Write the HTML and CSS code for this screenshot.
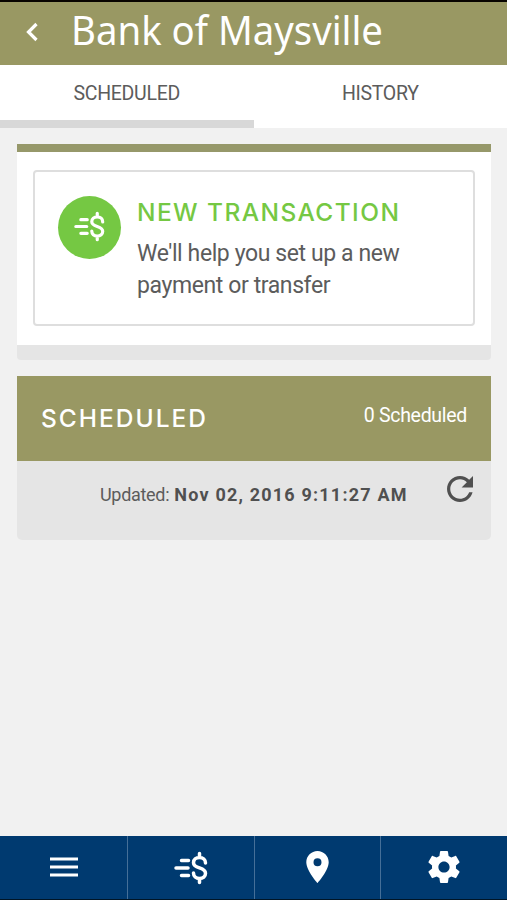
FILE: index.html
```html
<!DOCTYPE html>
<html lang="en">
<head>
    <meta charset="UTF-8">
    <meta name="viewport" content="width=device-width, initial-scale=1.0">
    <title>Bank of Maysville</title>
    <link rel="stylesheet" href="styles.css">
</head>
<body>

<header class="header">
    <svg class="back" viewBox="0 0 12 20"><path d="M10.500 2 2.500 10l8 8"/></svg>
    <svg class="logo" viewBox="0 0 330 63"><text x="2" y="45" textLength="312" lengthAdjust="spacingAndGlyphs">Bank of Maysville</text></svg>
</header>

<nav class="tabs">
    <div class="tab active">SCHEDULED</div>
    <div class="tab">HISTORY</div>
</nav>

<main class="content">
    <section class="card">
        <div class="card-body">
            <div class="new-transaction">
                <div class="circle">
                    <svg class="money" viewBox="0 0 34 34"><path d="M7.500 9.500h7M2 17h12M7.500 24.500h7"/><path d="M31.500 12c0-3.300-2.500-5.500-6-5.500s-6 2-6 5.200c0 6.500 12 4 12 10.600 0 3.200-2.500 5.200-6 5.200s-6-2.200-6-5.500M25.500 2.500v4M25.500 27.500v4"/></svg>
                </div>
                <div class="text">
                    <h2>NEW TRANSACTION</h2>
                    <p>We'll help you set up a new<br>payment or transfer</p>
                </div>
            </div>
        </div>
        <div class="card-footer"></div>
    </section>

    <section class="scheduled">
        <div class="scheduled-header">
            <h2>SCHEDULED</h2>
            <span class="count">0 Scheduled</span>
        </div>
        <div class="updated">
            <span class="label">Updated:</span>
            <b>Nov 02, 2016 9:11:27 AM</b>
            <svg class="refresh" viewBox="4 4 16 16"><path d="M17.650 6.350C16.200 4.900 14.210 4 12 4c-4.420 0-7.990 3.580-7.990 8s3.570 8 7.990 8c3.730 0 6.840-2.550 7.730-6h-2.080c-.82 2.330-3.040 4-5.650 4-3.310 0-6-2.690-6-6s2.690-6 6-6c1.660 0 3.140.69 4.220 1.780L13 11h7V4l-2.350 2.350z"/></svg>
        </div>
    </section>
</main>

<nav class="bottom-nav">
    <a class="item"><svg class="menu" viewBox="0 0 30 22"><path d="M1 3h28M1 11h28M1 19h28"/></svg></a>
    <a class="item"><svg class="money" viewBox="0 0 34 34"><path d="M7.500 9.500h7M2 17h12M7.500 24.500h7"/><path d="M31.500 12c0-3.300-2.500-5.500-6-5.500s-6 2-6 5.200c0 6.500 12 4 12 10.600 0 3.200-2.500 5.200-6 5.200s-6-2.200-6-5.500M25.500 2.500v4M25.500 27.500v4"/></svg></a>
    <a class="item"><svg class="pin" viewBox="5 2 14 20"><path d="M12 2C8.130 2 5 5.130 5 9c0 5.250 7 13 7 13s7-7.750 7-13c0-3.870-3.130-7-7-7zm0 9.500a2.500 2.500 0 0 1 0-5 2.500 2.500 0 0 1 0 5z"/></svg></a>
    <a class="item"><svg class="gear" viewBox="2 2 20 20"><path d="M19.430 12.980c.04-.32.07-.64.07-.98s-.03-.66-.07-.98l2.110-1.650c.19-.15.24-.42.12-.64l-2-3.460c-.12-.22-.39-.3-.61-.22l-2.490 1c-.52-.4-1.080-.73-1.690-.98l-.38-2.650C14.460 2.180 14.250 2 14 2h-4c-.25 0-.46.18-.49.42l-.38 2.650c-.61.25-1.170.59-1.690.98l-2.490-1c-.23-.09-.49 0-.61.22l-2 3.460c-.13.22-.07.49.12.64l2.110 1.650c-.04.32-.07.65-.07.98s.03.66.07.98l-2.110 1.650c-.19.15-.24.42-.12.64l2 3.460c.12.22.39.3.61.22l2.490-1c.52.4 1.080.73 1.690.98l.38 2.650c.03.24.24.42.49.42h4c.25 0 .46-.18.49-.42l.38-2.650c.61-.25 1.170-.59 1.690-.98l2.490 1c.23.09.49 0 .61-.22l2-3.460c.12-.22.07-.49-.12-.64l-2.110-1.650zM12 15.500c-1.930 0-3.500-1.570-3.500-3.500s1.570-3.500 3.500-3.500 3.500 1.570 3.500 3.500-1.570 3.500-3.500 3.500z"/></svg></a>
</nav>

</body>
</html>
```
FILE: styles.css
```css
* {
    box-sizing: border-box;
}
body {
    margin: 0;
    height: 900px;
    display: flex;
    flex-direction: column;
    background-color: #f1f1f1;
    font-family: Roboto, sans-serif;
    color: #5c5c5c;
    overflow: hidden;
}
h2, p {
    margin: 0;
}
svg {
    display: block;
    flex-shrink: 0;
}
.header {
    height: 65px;
    border-top: 2px solid #080400;
    background-color: #999863;
    display: flex;
    align-items: flex-start;
}
.back {
    width: 12px;
    height: 20px;
    margin: 20px 0 0 26px;
    fill: none;
    stroke: #fff;
    stroke-width: 3.2;
}
.logo {
    width: 330px;
    height: 63px;
    margin: -2px 0 0 31px;
    fill: #fff;
    font-family: "Noto Sans", sans-serif;
    font-size: 40.5px;
}
.tabs {
    height: 63px;
    display: flex;
    background-color: #fff;
}
.tab {
    flex: 1;
    padding-top: 17px;
    text-align: center;
    font-size: 19.5px;
    letter-spacing: -0.3px;
    line-height: 24px;
    border-bottom: 8px solid #fff;
}
.tab.active {
    border-bottom-color: #d8d8d8;
}
.content {
    flex: 1;
    padding: 16px 16px 0 17px;
}
.card-body {
    height: 201px;
    padding: 18px 16px 0;
    border-top: 8px solid #96986a;
    background-color: #fff;
}
.new-transaction {
    height: 156px;
    padding: 25px 23px 0;
    display: flex;
    border: 2px solid #dedede;
    border-radius: 4px;
}
.circle {
    width: 63px;
    height: 63px;
    margin-top: -1px;
    display: flex;
    align-items: center;
    justify-content: center;
    border-radius: 50%;
    background-color: #75c843;
}
.money {
    width: 34px;
    height: 34px;
    fill: none;
    stroke: #fff;
    stroke-width: 3.5;
    stroke-linecap: round;
}
.circle .money {
    width: 31px;
    height: 31px;
    margin-top: -3px;
}
.text {
    padding-left: 16px;
    white-space: nowrap;
}
h2 {
    font-family: Inter, sans-serif;
    font-size: 24.5px;
    font-weight: 500;
    line-height: 30px;
}
.text h2 {
    color: #75c843;
    letter-spacing: 1.4px;
}
.text p {
    margin-top: 11px;
    font-size: 23px;
    letter-spacing: -0.4px;
    line-height: 32px;
}
.card-footer {
    height: 15px;
    background-color: #e5e5e5;
    border-radius: 0 0 4px 4px;
}
.scheduled {
    margin-top: 16px;
}
.scheduled-header {
    height: 85px;
    padding: 27px 24px 0;
    display: flex;
    justify-content: space-between;
    background-color: #999863;
    color: #fff;
}
.scheduled-header h2 {
    letter-spacing: 2px;
}
.count {
    padding-top: 1px;
    font-size: 19.5px;
    letter-spacing: -0.3px;
    line-height: 24px;
}
.updated {
    height: 79px;
    padding: 0 18px 0 83px;
    display: flex;
    background-color: #e5e5e5;
    border-radius: 0 0 5px 5px;
    white-space: nowrap;
    font-size: 18px;
    line-height: 68px;
}
.updated .label {
    letter-spacing: -0.3px;
}
.updated b {
    margin-left: 5px;
    letter-spacing: 1.2px;
    color: #505050;
}
.refresh {
    width: 26px;
    height: 26px;
    margin: 15px 0 0 auto;
    fill: #505050;
}
.bottom-nav {
    height: 64px;
    padding-left: 1px;
    display: flex;
    background-color: #003a70;
    border-bottom: 1px solid #001526;
}
.item {
    flex: 1;
    display: flex;
    align-items: center;
    justify-content: center;
    border-left: 1px solid #456f98;
}
.item:first-child {
    border-left: none;
}
.menu {
    width: 30px;
    height: 22px;
    margin-bottom: 1px;
    stroke: #fff;
    stroke-width: 3.2;
}
.pin {
    width: 23px;
    height: 32px;
    margin-bottom: 2px;
    fill: #fff;
}
.gear {
    width: 32px;
    height: 32px;
    margin-bottom: 2px;
    fill: #fff;
}
```
